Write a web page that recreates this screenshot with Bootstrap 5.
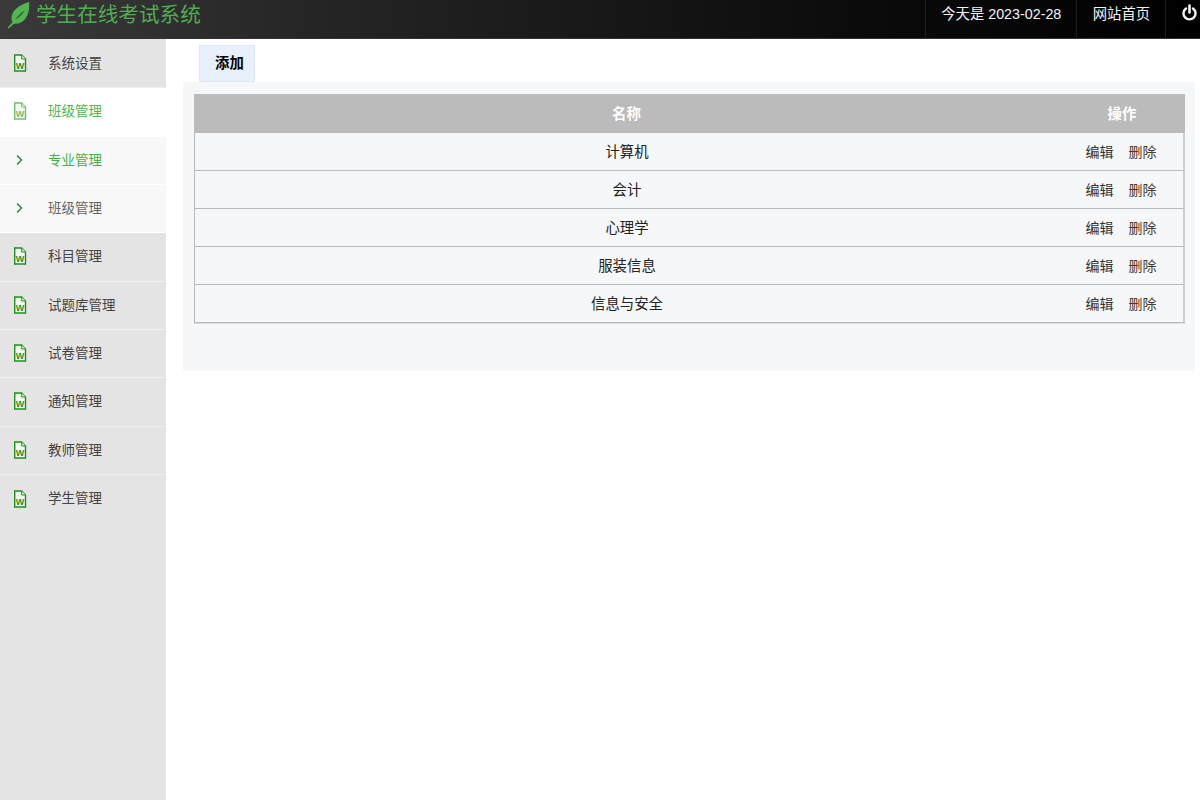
<!DOCTYPE html>
<html lang="zh">
<head>
<meta charset="utf-8">
<title>学生在线考试系统</title>
<link href="https://cdn.jsdelivr.net/npm/bootstrap@5.3.0/dist/css/bootstrap.min.css" rel="stylesheet">
<style>
html,body{height:100%;overflow:hidden}
body{font-family:"Liberation Sans","Noto Sans CJK SC",sans-serif;font-size:14.4px;background:#fff;color:#222}
.topbar{height:39px;background:linear-gradient(90deg,#3a3a3a 0%,#262626 25%,#0c0c0c 70%,#000 100%);border-bottom:1px solid #333}
.brand{color:#52ac52;font-size:20.6px;line-height:30px;gap:6px;padding-left:7px}
.top-cell{color:#f2f2f2;font-size:14.3px;line-height:28px;padding:0 15px 0 15.5px;border-left:1px solid #1d1d1d;height:38px}
.top-power{padding:4px 3px 0 16px;width:35px}
.shell{height:761px}
.side{width:166px;background:#e4e4e4;flex:none;padding-top:1px}
.side-item{height:48.33px;color:#444;font-size:13.5px;border-bottom:1px solid #efefef;padding:1px 0 0 13px}
.side-item:last-child{border-bottom:0}
.side-item svg{flex:none;width:14px;height:18px;margin:-2px 21px 0 0;color:#1e8f1e}
.side-item.is-open{background:#fff;color:#52b452;border-bottom-color:#fff}
.side-item.is-open svg{color:#6fbf6f}
.side-item.is-sub{background:#f8f8f8;color:#666;border-bottom-color:#fff}
.side-item.is-sub svg{height:12px}
.side-item.is-sub.is-on{color:#45b045}
.main{padding:6px 5px 0 17px}
.tab-add{margin-left:16px;width:56px;height:37px;background:#e8f0fb;border:1px solid #dfe8f5;font-weight:700;color:#000;font-size:14.4px;padding-left:5px}
.panel-box{background:#f6f7f8;padding:12px 10px 49px 11px;height:289px}
.grid-table{width:991px;table-layout:fixed;border-collapse:separate;border-spacing:0;margin:0}
.grid-table th{background:#bbb;color:#fff;font-weight:700;height:39px;text-align:center;padding:2px 0 0;border:0;font-size:14.4px}
.grid-table td{height:38px;text-align:center;padding:2px 0 0;border-bottom:1px solid #b8babc;box-shadow:0 1px 0 #dcdddf;color:#222;font-size:14.4px;background:#f6f7f8}
.grid-table td:first-child{border-left:1px solid #b8babc}
.grid-table td:last-child{border-right:2px solid #ccced0}
.col-act{width:126px}
.act{color:#333;text-decoration:none;margin:0 7.5px;font-size:14px}
.act-del{color:#4a3a25}
</style>
</head>
<body>
<svg width="0" height="0" class="d-block position-absolute">
<defs>
<symbol id="doc" viewBox="0 0 14 18"><path d="M1.700 1h7l3.800 4v12H1.700z" fill="#f6f8f0" stroke="currentColor" stroke-width="1.400"/><path d="M8.700 1v4h3.800" fill="#dff0d8" stroke="currentColor" stroke-width="1"/><text x="7.100" y="14.500" font-size="9" font-weight="700" text-anchor="middle" fill="currentColor" font-family="Liberation Sans">W</text></symbol>
<symbol id="chev" viewBox="0 0 14 12"><path d="M4 1.500 8.500 6 4 10.500" fill="none" stroke="#2e8b3a" stroke-width="1.500"/></symbol>
</defs>
</svg>
<header class="topbar d-flex justify-content-between align-items-start">
<div class="brand d-flex align-items-center">
<svg width="23" height="28" viewBox="0 0 23 28"><path d="M22 1C23.500 14 17 24 6 22.500 1 13 9 5 22 1Z" fill="#52b452"/><path d="M0.500 26.500 6.500 20.500 8 22 1.500 27.500Z" fill="#52b452"/><path d="M8 18.500C11 15 14 12 17.500 9.500 15.500 13.500 12 16.500 8 18.500Z" fill="#2d4a2d"/></svg>
<span>学生在线考试系统</span>
</div>
<div class="d-flex">
<div class="top-cell">今天是 2023-02-28</div>
<div class="top-cell">网站首页</div>
<div class="top-cell top-power"><svg class="d-block" width="15" height="18" viewBox="0 0 15 18"><path d="M4 4.500a6 6 0 1 0 7 0" fill="none" stroke="#f4f4f4" stroke-width="2.400" stroke-linecap="round"/><path d="M7.500 1.500v7" stroke="#f4f4f4" stroke-width="2.600" stroke-linecap="round"/></svg></div>
</div>
</header>
<div class="shell d-flex">
<nav class="side">
<div class="side-item d-flex align-items-center"><svg><use href="#doc"/></svg>系统设置</div>
<div class="side-item is-open d-flex align-items-center"><svg><use href="#doc"/></svg>班级管理</div>
<div class="side-item is-sub is-on d-flex align-items-center"><svg><use href="#chev"/></svg>专业管理</div>
<div class="side-item is-sub d-flex align-items-center"><svg><use href="#chev"/></svg>班级管理</div>
<div class="side-item d-flex align-items-center"><svg><use href="#doc"/></svg>科目管理</div>
<div class="side-item d-flex align-items-center"><svg><use href="#doc"/></svg>试题库管理</div>
<div class="side-item d-flex align-items-center"><svg><use href="#doc"/></svg>试卷管理</div>
<div class="side-item d-flex align-items-center"><svg><use href="#doc"/></svg>通知管理</div>
<div class="side-item d-flex align-items-center"><svg><use href="#doc"/></svg>教师管理</div>
<div class="side-item d-flex align-items-center"><svg><use href="#doc"/></svg>学生管理</div>
</nav>
<main class="main flex-grow-1">
<div class="tab-add d-flex align-items-center justify-content-center">添加</div>
<div class="panel-box">
<table class="grid-table">
<colgroup><col><col class="col-act"></colgroup>
<thead><tr><th>名称</th><th>操作</th></tr></thead>
<tbody>
<tr><td>计算机</td><td><a class="act" href="#">编辑</a><a class="act act-del" href="#">删除</a></td></tr>
<tr><td>会计</td><td><a class="act" href="#">编辑</a><a class="act act-del" href="#">删除</a></td></tr>
<tr><td>心理学</td><td><a class="act" href="#">编辑</a><a class="act act-del" href="#">删除</a></td></tr>
<tr><td>服装信息</td><td><a class="act" href="#">编辑</a><a class="act act-del" href="#">删除</a></td></tr>
<tr><td>信息与安全</td><td><a class="act" href="#">编辑</a><a class="act act-del" href="#">删除</a></td></tr>
</tbody>
</table>
</div>
</main>
</div>
<script src="https://cdn.jsdelivr.net/npm/bootstrap@5.3.0/dist/js/bootstrap.bundle.min.js"></script>
</body>
</html>
